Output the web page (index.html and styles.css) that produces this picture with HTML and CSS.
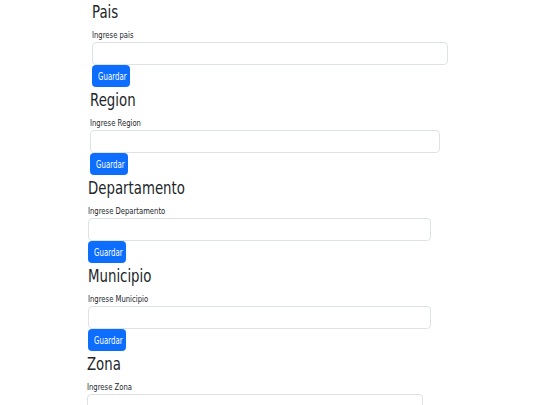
FILE: index.html
```html
<!DOCTYPE html>
<html lang="es">
<head>
  <meta charset="UTF-8">
  <meta name="viewport" content="width=device-width, initial-scale=1.0">
  <title>Ubicaciones</title>
  <link rel="stylesheet" href="styles.css">
</head>
<body>
  <div class="forms">
    <form class="form-block pais">
      <h2 class="title"><span>Pais</span></h2>
      <label class="label"><span>Ingrese pais</span></label>
      <input class="input" type="text">
      <button class="btn" type="button"><span>Guardar</span></button>
    </form>
    <form class="form-block region">
      <h2 class="title"><span>Region</span></h2>
      <label class="label"><span>Ingrese Region</span></label>
      <input class="input" type="text">
      <button class="btn" type="button"><span>Guardar</span></button>
    </form>
    <form class="form-block departamento">
      <h2 class="title"><span>Departamento</span></h2>
      <label class="label"><span>Ingrese Departamento</span></label>
      <input class="input" type="text">
      <button class="btn" type="button"><span>Guardar</span></button>
    </form>
    <form class="form-block municipio">
      <h2 class="title"><span>Municipio</span></h2>
      <label class="label"><span>Ingrese Municipio</span></label>
      <input class="input" type="text">
      <button class="btn" type="button"><span>Guardar</span></button>
    </form>
    <form class="form-block zona">
      <h2 class="title"><span>Zona</span></h2>
      <label class="label"><span>Ingrese Zona</span></label>
      <input class="input" type="text">
      <button class="btn" type="button"><span>Guardar</span></button>
    </form>
  </div>
</body>
</html>
```

FILE: styles.css
```css
body {
  margin: 0;
  font-family: "DejaVu Sans", sans-serif;
  color: #212529;
  background-color: #fff;
  overflow: hidden;
}

.forms {
  display: flex;
  flex-direction: column;
}

.form-block {
  display: flex;
  flex-direction: column;
  align-items: flex-start;
  height: 88px;
  margin: 0;
}

/* each block sits a little further left than the one above */
.pais { margin-left: 92px; width: 356px; }
.region { margin-left: 90px; width: 350px; }
.departamento { margin-left: 88px; width: 343px; }
.municipio { margin-left: 88px; width: 343px; }
.zona { margin-left: 87px; width: 336px; }

.title {
  margin: 0;
  font-size: 18.5px;
  font-weight: 400;
  line-height: 24px;
}

.title span {
  display: inline-block;
  transform: scaleX(0.72);
  transform-origin: left center;
  white-space: nowrap;
}

.label {
  margin: 5px 0 1px;
  font-size: 9px;
  line-height: 12px;
}

.label span {
  display: inline-block;
  transform: scaleX(0.76);
  transform-origin: left center;
  white-space: nowrap;
}

.input {
  box-sizing: border-box;
  width: 100%;
  height: 23px;
  margin: 0;
  border: 1px solid #dee2e6;
  border-radius: 4px;
  background-color: #fff;
}

.btn {
  width: 38px;
  height: 22px;
  padding: 0;
  border: none;
  border-radius: 4px;
  background-color: #0d6efd;
  color: #fff;
  font-family: "DejaVu Sans", sans-serif;
  font-size: 10px;
}

.btn span {
  display: inline-block;
  transform: scaleX(0.7);
  white-space: nowrap;
}
```
